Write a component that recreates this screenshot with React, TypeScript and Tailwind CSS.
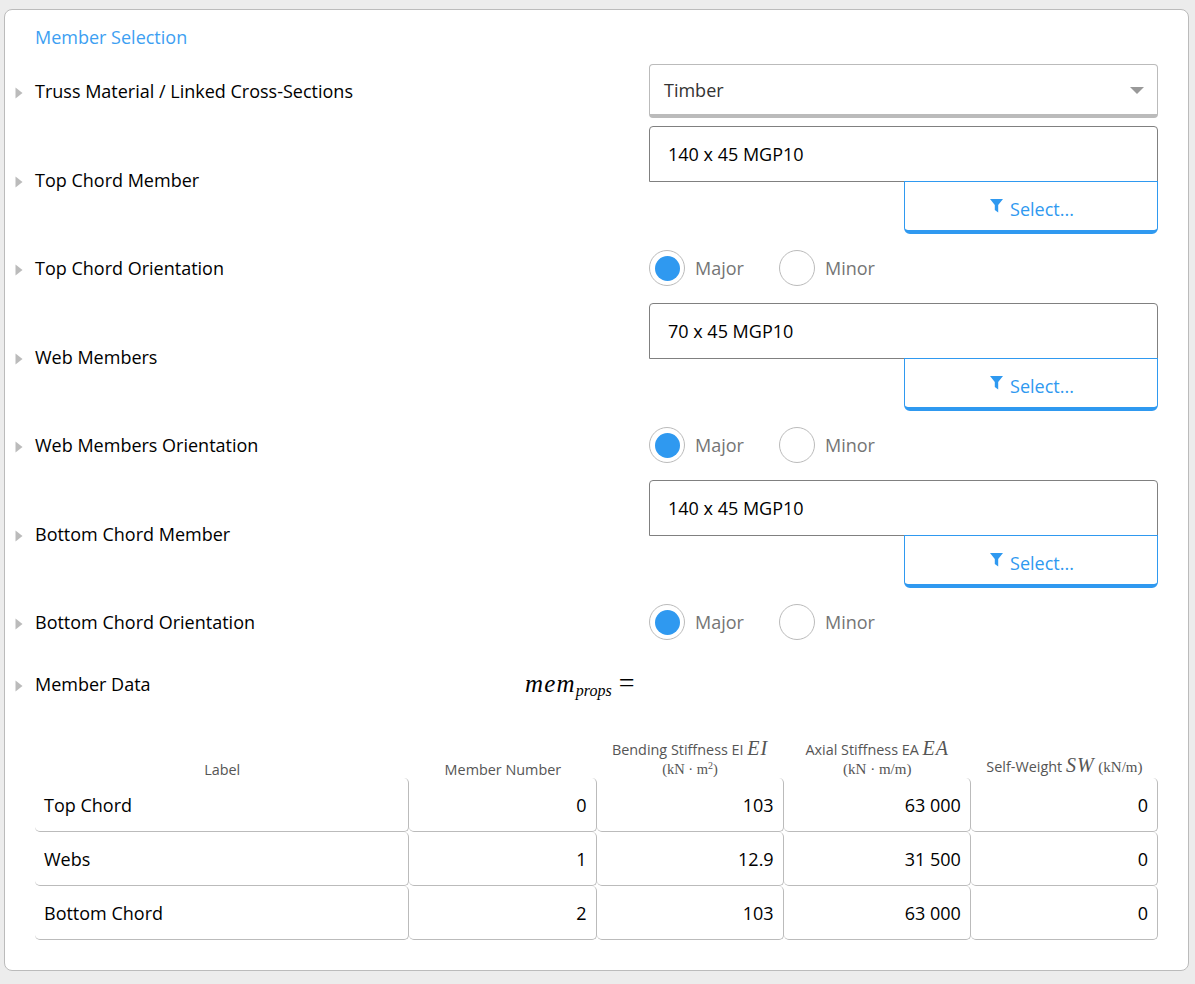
import React from 'react';

const sans = "font-['Open_Sans',sans-serif]";
const math = "font-['Liberation_Serif',serif]";

const Caret = () => (
  <svg width="20" height="12" viewBox="0 0 20 12" className="shrink-0 mt-[4px]">
    <polygon points="0,0.5 7,6 0,11.5" fill="#bbbbbb" transform="translate(0.5 0)" />
  </svg>
);

const Row: React.FC<{ label: string; children: React.ReactNode; className?: string; labelClass?: string }> = ({ label, children, className, labelClass }) => (
  <div className={`flex items-center ${className ?? ''}`}>
    <Caret />
    <div className={`flex-1 text-[18px] text-black ${labelClass ?? ''}`}>{label}</div>
    <div className="w-[509px]">{children}</div>
  </div>
);

const Picker: React.FC<{ value: string }> = ({ value }) => (
  <div className="flex flex-col">
    <div className="h-[56px] border border-[#808080] rounded-t-[4px] pl-[18px] flex items-center text-[18px] text-black">{value}</div>
    <div className="flex justify-end">
      <div className="w-[254px] h-[53px] -mt-px border border-[#2f99f0] border-b-[4px] rounded-b-[6px] flex items-center justify-center gap-[7px] pt-[6px] pl-[2px] text-[18px] text-[#2f99f0]">
        <svg width="13" height="14" viewBox="0 0 13 14" className="-mt-[6px]">
          <polygon points="0,0 13,0 8.2,6 8.2,13.5 4.8,11 4.8,6" fill="#2f99f0" />
        </svg>
        <span>Select...</span>
      </div>
    </div>
  </div>
);

const Radios = () => (
  <div className="flex items-center h-[36px] text-[18px] text-[#757575]">
    <div className="w-[36px] h-[36px] rounded-full border border-[#bbbbbb] flex items-center justify-center">
      <div className="w-[25px] h-[25px] rounded-full bg-[#2f99f0]" />
    </div>
    <span className="ml-[10px] w-[84px]">Major</span>
    <div className="w-[36px] h-[36px] rounded-full border border-[#bbbbbb]" />
    <span className="ml-[10px]">Minor</span>
  </div>
);

const rows = [
  { label: 'Top Chord', num: '0', ei: '103', ea: '63 000' },
  { label: 'Webs', num: '1', ei: '12.9', ea: '31 500' },
  { label: 'Bottom Chord', num: '2', ei: '103', ea: '63 000' },
];

const cell = 'h-[54px] pt-[2px] border-r border-b border-[#bbbbbb] rounded-[5px] flex items-center text-[18px] text-black';
const head = 'h-[43px] text-[14.4px] text-[#555555] whitespace-nowrap';
const sym = `${math} italic text-[20px] leading-none tracking-[1px]`;

export default function App() {
  return (
    <div className={`${sans} min-h-[984px] bg-[#ececec] pt-[9px] pl-[4px] pr-[6px]`}>
      <div className="h-[962px] bg-white border border-[#bbbbbb] rounded-[8px] pl-[10px] pr-[30px]">
        <div className="h-[53px] mb-[1px] pt-[2px] pl-[20px] flex items-center text-[18px] text-[#3d9ff2]">Member Selection</div>

        <Row label="Truss Material / Linked Cross-Sections" className="mb-[8px]">
          <div className="h-[54px] pt-[2px] border border-[#bbbbbb] border-b-[4px] rounded-[4px] pl-[14px] pr-[13px] flex items-center justify-between text-[18px] text-[#333333]">
            <span>Timber</span>
            <svg width="14" height="7" viewBox="0 0 14 7"><polygon points="0,0 14,0 7,7" fill="#999999" /></svg>
          </div>
        </Row>

        <Row label="Top Chord Member" labelClass="pt-[1px]" className="mb-[16px]"><Picker value="140 x 45 MGP10" /></Row>
        <Row label="Top Chord Orientation" className="mb-[17px]"><Radios /></Row>
        <Row label="Web Members" labelClass="pt-[1px]" className="mb-[16px]"><Picker value="70 x 45 MGP10" /></Row>
        <Row label="Web Members Orientation" className="mb-[17px]"><Radios /></Row>
        <Row label="Bottom Chord Member" labelClass="pt-[1px]" className="mb-[16px]"><Picker value="140 x 45 MGP10" /></Row>
        <Row label="Bottom Chord Orientation"><Radios /></Row>

        <div className="flex items-center h-[52px] mt-[18px]">
          <Caret />
          <div className="w-[490px] text-[18px] text-black">Member Data</div>
          <div className={`${math} italic text-black text-[25px] leading-none tracking-[1.2px] whitespace-nowrap pb-[3px]`}>
            mem<sub className="text-[16px] bottom-0 align-[-4px] tracking-normal">props</sub>
            <span className="not-italic ml-[7px] text-[28px]">=</span>
          </div>
        </div>

        <div className="ml-[20px] mt-[25px] grid grid-cols-[2fr_1fr_1fr_1fr_1fr]">
          <div className={`${head} flex items-end justify-center leading-[16px]`}>Label</div>
          <div className={`${head} flex items-end justify-center leading-[16px]`}>Member Number</div>
          <div className={`${head} flex flex-col items-center justify-end leading-[20px]`}>
            <span>Bending Stiffness EI <span className={sym}>EI</span></span>
            <span className={`${math} text-[14.5px] leading-[18px]`}>(kN · m<sup className="text-[10px]">2</sup>)</span>
          </div>
          <div className={`${head} flex flex-col items-center justify-end leading-[20px]`}>
            <span>Axial Stiffness EA <span className={sym}>EA</span></span>
            <span className={`${math} text-[15px] leading-[18px]`}>(kN · m/m)</span>
          </div>
          <div className={`${head} flex items-end justify-center pb-[3px] leading-[16px]`}>
            <span>Self-Weight <span className={sym}>SW</span> <span className={`${math} text-[15px]`}>(kN/m)</span></span>
          </div>

          {rows.map((r) => (
            <React.Fragment key={r.label}>
              <div className={`${cell} pl-[9px]`}>{r.label}</div>
              <div className={`${cell} justify-end pr-[9px]`}>{r.num}</div>
              <div className={`${cell} justify-end pr-[9px]`}>{r.ei}</div>
              <div className={`${cell} justify-end pr-[9px]`}>{r.ea}</div>
              <div className={`${cell} justify-end pr-[9px]`}>0</div>
            </React.Fragment>
          ))}
        </div>
      </div>
    </div>
  );
}
